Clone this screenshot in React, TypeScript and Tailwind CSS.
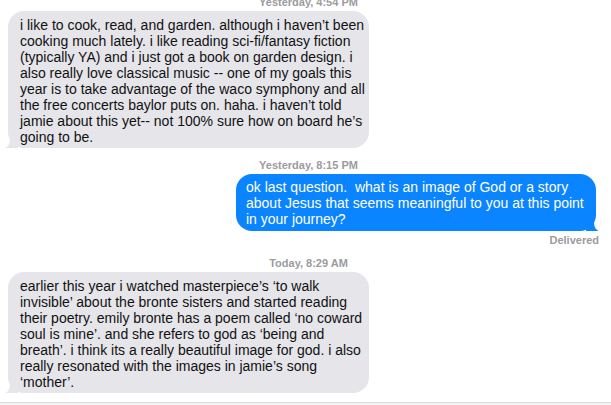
import React from "react";

const font = { fontFamily: '"Liberation Sans", Arial, sans-serif' };

const first = [
  "i like to cook, read, and garden. although i haven\u2019t been",
  "cooking much lately. i like reading sci-fi/fantasy fiction",
  "(typically YA) and i just got a book on garden design. i",
  "also really love classical music -- one of my goals this",
  "year is to take advantage of the waco symphony and all",
  "the free concerts baylor puts on. haha. i haven\u2019t told",
  "jamie about this yet-- not 100% sure how on board he\u2019s",
  "going to be.",
];

const question = [
  "ok last question.  what is an image of God or a story",
  "about Jesus that seems meaningful to you at this point",
  "in your journey?",
];

const reply = [
  "earlier this year i watched masterpiece\u2019s \u2018to walk",
  "invisible\u2019 about the bronte sisters and started reading",
  "their poetry. emily bronte has a poem called \u2018no coward",
  "soul is mine\u2019. and she refers to god as \u2018being and",
  "breath\u2019. i think its a really beautiful image for god. i also",
  "really resonated with the images in jamie\u2019s song",
  "\u2018mother\u2019.",
];

function Stamp({ children, className = "" }: { children: React.ReactNode; className?: string }) {
  return (
    <div className={`text-center text-[11px] font-bold leading-[13px] text-[#9b9ba0] pl-[6px] ${className}`}>
      {children}
    </div>
  );
}

function Lines({ lines }: { lines: string[] }) {
  return (
    <>
      {lines.map((l, i) => (
        <div key={i} className="whitespace-pre">
          {l}
        </div>
      ))}
    </>
  );
}

function Received({ lines }: { lines: string[] }) {
  return (
    <div className="relative ml-[8px] w-[361px] rounded-[16px] bg-[#e5e5ea] pl-[12px] pr-[10px] pt-[6px] pb-[3px] text-[14px] leading-[16px] text-[#111]">
      <Lines lines={lines} />
      <svg className="absolute -left-[4px] bottom-0" width="14" height="12" viewBox="0 0 14 12">
        <path d="M14 0 L14 12 L1 12 C4 11 6 8 6 3 Z" fill="#e5e5ea" />
      </svg>
    </div>
  );
}

export default function App() {
  return (
    <div className="h-[405px] w-[611px] overflow-hidden bg-white flex flex-col" style={font}>
      <Stamp className="-mt-[4px]">Yesterday, 4:54 PM</Stamp>
      <div className="mt-[2px]">
        <Received lines={first} />
      </div>

      <Stamp className="mt-[11px]">Yesterday, 8:15 PM</Stamp>
      <div className="mt-[2px] flex justify-end pr-[15px]">
        <div className="relative w-[360px] rounded-[16px] bg-[#0b84ff] pl-[10px] pr-[10px] pt-[5px] pb-[4px] text-[14px] leading-[16px] text-white">
          <Lines lines={question} />
          <svg className="absolute -right-[4px] bottom-0" width="14" height="12" viewBox="0 0 14 12">
            <path d="M0 0 L0 12 L13 12 C10 11 8 8 8 3 Z" fill="#0b84ff" />
          </svg>
        </div>
      </div>
      <div className="mt-[3px] pr-[12px] text-right text-[11px] font-bold leading-[13px] text-[#9b9ba0]">
        Delivered
      </div>

      <Stamp className="mt-[10px]">Today, 8:29 AM</Stamp>
      <div className="mt-[2px]">
        <Received lines={reply} />
      </div>

      <div className="mt-auto h-[3px] border-t border-[#dcdcdc] bg-[#f4f4f4]" />
    </div>
  );
}
